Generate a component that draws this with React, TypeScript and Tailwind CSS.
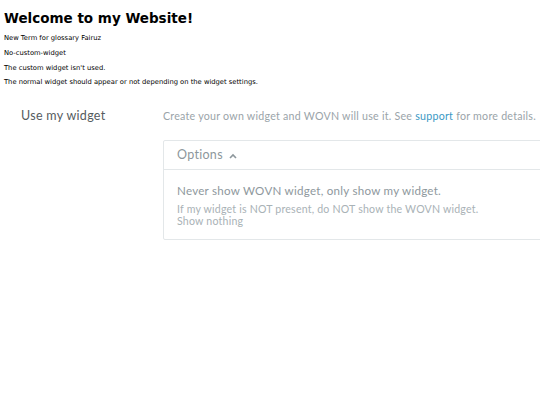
import React from "react";

export default function App() {
  return (
    <div className="w-[540px] h-[405px] overflow-hidden bg-white">
      <div className="px-1 pt-[9px]">
        <h1 className="font-['DejaVu_Sans',sans-serif] font-bold text-[13.5px] leading-[18px] text-black">
          Welcome to my Website!
        </h1>
        <div className="font-['DejaVu_Sans',sans-serif] text-[6.75px] text-black leading-[9px] mt-[7px] flex flex-col gap-[5.8px]">
          <p>New Term for glossary Fairuz</p>
          <p>No-custom-widget</p>
          <p>The custom widget isn't used.</p>
          <p>The normal widget should appear or not depending on the widget settings.</p>
        </div>
      </div>
      <div className="flex mt-[19px] font-['Lato',sans-serif]">
        <div className="w-[163px] shrink-0 pl-[21px] text-[12.5px] tracking-[0.3px] text-[#555b5e] leading-[20px]">
          Use my widget
        </div>
        <div className="w-[420px] shrink-0">
          <div className="text-[10.65px] tracking-[0.25px] text-[#9aa4a9] leading-[20px]">
            Create your own widget and WOVN will use it. See{" "}
            <span className="text-[#3a98c4]">support</span> for more details.
          </div>
          <div className="mt-[14px] border border-[#e3e7e9] rounded-[2px]">
            <div className="h-[29px] flex items-center pl-[13px] gap-[6px] border-b border-[#e3e7e9]">
              <span className="text-[12.5px] tracking-[0.3px] text-[#8d979c]">Options</span>
              <svg width="8" height="6" viewBox="0 0 8 6" className="mt-[1px]">
                <path d="M1 5 L4 2 L7 5" stroke="#8d979c" strokeWidth="1.6" fill="none" />
              </svg>
            </div>
            <div className="pl-[13px] pt-[13px] pb-[12px]">
              <div className="text-[11.6px] tracking-[0.25px] text-[#8e989d] leading-[16px]">
                Never show WOVN widget, only show my widget.
              </div>
              <div className="mt-[5px] text-[10.6px] tracking-[0.2px] text-[#a9b2b6] leading-[11.5px]">
                <div>If my widget is NOT present, do NOT show the WOVN widget.</div>
                <div>Show nothing</div>
              </div>
            </div>
          </div>
        </div>
      </div>
    </div>
  );
}
